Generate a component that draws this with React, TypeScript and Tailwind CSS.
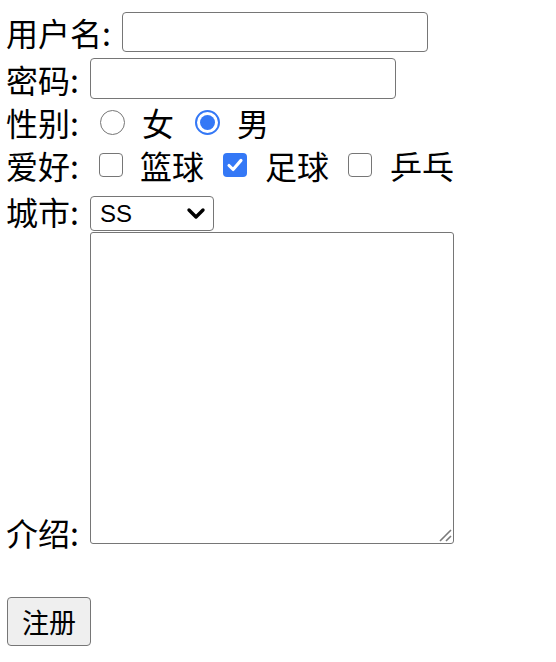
import React from "react";

function Radio({ checked }: { checked?: boolean }) {
  if (checked) {
    return (
      <div className="w-[25px] h-[25px] rounded-full border-[2px] border-[#3478f6] bg-white flex items-center justify-center shrink-0">
        <div className="w-[15px] h-[15px] rounded-full bg-[#3478f6]" />
      </div>
    );
  }
  return <div className="w-[25px] h-[25px] rounded-full border-[1.5px] border-[#767676] bg-white shrink-0" />;
}

function Checkbox({ checked }: { checked?: boolean }) {
  if (checked) {
    return (
      <div className="w-[24px] h-[24px] rounded-[4px] bg-[#3478f6] flex items-center justify-center shrink-0">
        <svg width="20" height="20" viewBox="0 0 16 16">
          <path d="M3.2 8.4 L6.5 11.6 L12.8 4.3" fill="none" stroke="white" strokeWidth="2.5" strokeLinecap="round" strokeLinejoin="round" />
        </svg>
      </div>
    );
  }
  return <div className="w-[24px] h-[24px] rounded-[4px] border-[1.5px] border-[#767676] bg-white shrink-0" />;
}

export default function App() {
  return (
    <div className="bg-white min-h-[662px] w-[556px] pl-[6px] pt-[12px] font-['Noto_Sans_CJK_SC',sans-serif] text-[32px] text-black">
      <div className="flex items-center h-[40px]">
        <span className="w-[116px] leading-[40px] whitespace-nowrap">用户名:</span>
        <div className="w-[306px] h-[40px] border-[1.5px] border-[#767676] rounded-[4px] bg-white" />
      </div>
      <div className="flex items-center h-[41px] mt-[6px]">
        <span className="w-[84px] leading-[40px] whitespace-nowrap">密码:</span>
        <div className="w-[306px] h-[41px] border-[1.5px] border-[#767676] rounded-[4px] bg-white" />
      </div>
      <div className="flex items-center h-[46px]">
        <span className="w-[84px] leading-[40px] whitespace-nowrap">性别:</span>
        <div className="ml-[10px]"><Radio /></div>
        <span className="ml-[17px] leading-[40px]">女</span>
        <div className="ml-[21px]"><Radio checked /></div>
        <span className="ml-[17px] leading-[40px]">男</span>
      </div>
      <div className="flex items-center h-[40px]">
        <span className="w-[84px] leading-[40px] whitespace-nowrap">爱好:</span>
        <div className="ml-[9px]"><Checkbox /></div>
        <span className="ml-[17px] leading-[40px]">篮球</span>
        <div className="ml-[19px]"><Checkbox checked /></div>
        <span className="ml-[18px] leading-[40px]">足球</span>
        <div className="ml-[19px]"><Checkbox /></div>
        <span className="ml-[18px] leading-[40px]">乒乓</span>
      </div>
      <div className="flex items-end h-[46px]">
        <span className="w-[84px] leading-[40px] whitespace-nowrap">城市:</span>
        <div className="w-[124px] h-[35px] border-[1.5px] border-[#767676] rounded-[4px] bg-white flex items-center justify-between pl-[9px] pr-[7px]">
          <span className="font-['Liberation_Sans',Arial,sans-serif] text-[24px] leading-none">SS</span>
          <svg width="20" height="13" viewBox="0 0 20 13">
            <path d="M3 3 L10 10 L17 3" fill="none" stroke="black" strokeWidth="3.4" strokeLinecap="round" strokeLinejoin="round" />
          </svg>
        </div>
      </div>
      <div className="flex items-end mt-[1px]">
        <span className="w-[84px] leading-[40px] whitespace-nowrap">介绍:</span>
        <div className="relative w-[364px] h-[312px] mb-[8px] border-[1.5px] border-[#767676] rounded-[3px] bg-white">
          <svg className="absolute right-[1px] bottom-[1px]" width="14" height="14" viewBox="0 0 14 14">
            <path d="M13 2 L2 13 M13 8 L8 13" fill="none" stroke="#7a7a7a" strokeWidth="1.6" />
          </svg>
        </div>
      </div>
      <div className="mt-[45px] ml-[1px]">
        <div className="w-[84px] h-[49px] border-[1.5px] border-[#767676] rounded-[4px] bg-[#efefef] flex items-center justify-center text-[27px] leading-none">
          注册
        </div>
      </div>
    </div>
  );
}
